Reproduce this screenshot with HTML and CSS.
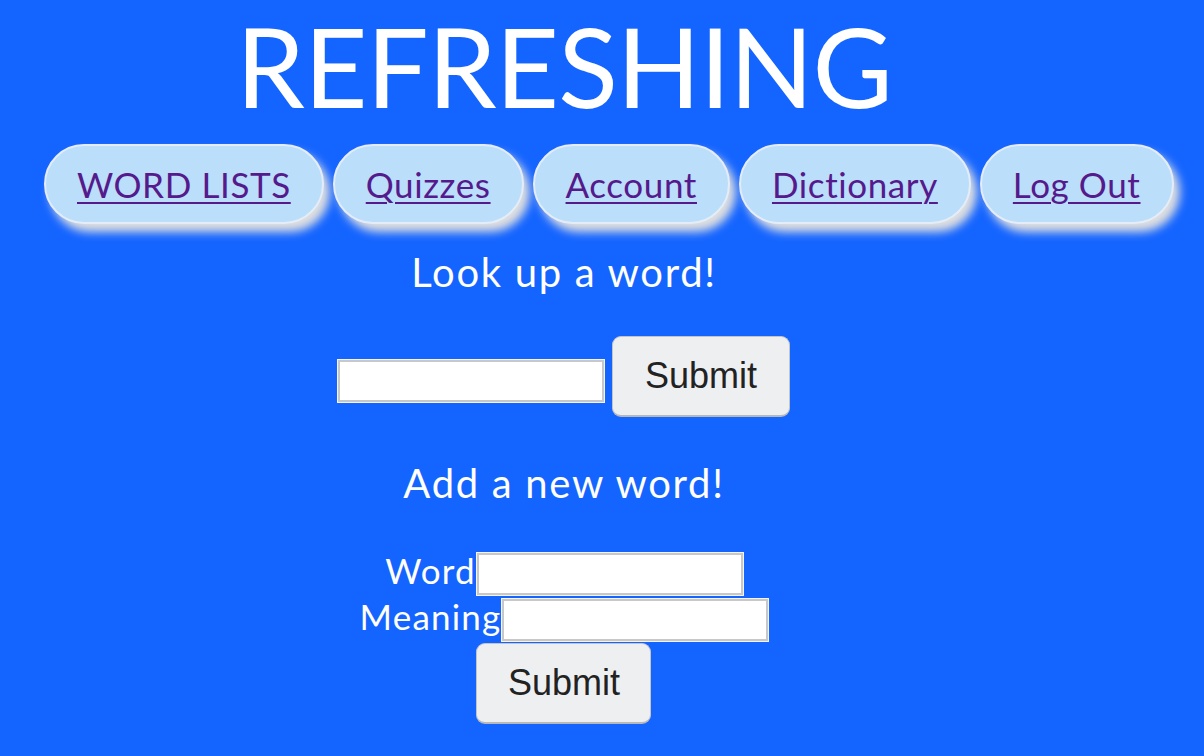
FILE: index.html
```html
<!DOCTYPE html>
<html lang="en">
<head>
<meta charset="utf-8">
<title>Refreshing</title>
<link rel="stylesheet" href="styles.css">
</head>
<body>
<div class="page">
  <h1 class="title">REFRESHING</h1>
  <nav class="nav">
    <a class="nav-btn" href="#">WORD LISTS</a>
    <a class="nav-btn" href="#">Quizzes</a>
    <a class="nav-btn" href="#">Account</a>
    <a class="nav-btn" href="#">Dictionary</a>
    <a class="nav-btn" href="#">Log Out</a>
  </nav>
  <h2 class="heading heading-lookup">Look up a word!</h2>
  <form class="search-form">
    <input class="text-input" type="text">
    <button class="submit-btn" type="button">Submit</button>
  </form>
  <h2 class="heading heading-add">Add a new word!</h2>
  <form class="add-form">
    <div class="field-row"><label class="field-label">Word</label><input class="text-input" type="text"></div>
    <div class="field-row"><label class="field-label">Meaning</label><input class="text-input" type="text"></div>
    <button class="submit-btn submit-add" type="button">Submit</button>
  </form>
</div>
</body>
</html>
```
FILE: styles.css
```css
html, body {
  margin: 0;
  padding: 0;
  background: #1464ff;
}
body {
  font-family: "Lato", "Open Sans", sans-serif;
  color: #ffffff;
  overflow: hidden;
}
.page {
  width: 1128px;
  display: flex;
  flex-direction: column;
  align-items: center;
}
.title {
  margin: 10px 0 0 0;
  font-size: 110px;
  font-weight: 400;
  line-height: 110px;
  letter-spacing: -1px;
}
.nav {
  align-self: flex-start;
  display: flex;
  gap: 9px;
  margin: 24px 0 0 44px;
}
.nav-btn {
  display: flex;
  align-items: center;
  height: 76px;
  padding: 0 31px;
  border: 2px solid #e4edf7;
  border-radius: 40px;
  background: #bbdefb;
  box-shadow: 6px 8px 10px #e0e0e0;
  color: #551a8b;
  font-size: 35px;
  letter-spacing: 0.6px;
  text-decoration: underline;
  text-decoration-thickness: 2px;
  text-underline-offset: 4px;
  white-space: nowrap;
}
.heading {
  margin: 0;
  font-size: 40px;
  font-weight: 400;
  line-height: 48px;
  letter-spacing: 1.7px;
}
.heading-lookup {
  margin-top: 24px;
}
.search-form {
  display: flex;
  align-items: flex-start;
  gap: 8px;
  margin-top: 40px;
}
.search-form .text-input {
  margin-top: 24px;
}
.text-input {
  box-sizing: border-box;
  width: 266px;
  height: 42px;
  margin: 0;
  padding: 0;
  background: #ffffff;
  border: 2px solid #c8c8c8;
  outline: 1px solid #f4f4f4;
}
.submit-btn {
  box-sizing: border-box;
  width: 178px;
  height: 81px;
  margin: 0;
  padding: 0;
  background: #eeeff1;
  border: 1px solid #c4c4c4;
  border-bottom: 2px solid #b8b8b8;
  border-radius: 9px;
  color: #222222;
  font-family: "Liberation Sans", Arial, sans-serif;
  font-size: 36px;
}
.heading-add {
  margin-top: 42px;
}
.add-form {
  display: flex;
  flex-direction: column;
  align-items: center;
  margin-top: 46px;
}
.field-row {
  display: flex;
  align-items: flex-start;
  height: 46px;
}
.field-label {
  font-size: 35px;
  line-height: 34px;
  letter-spacing: 1.2px;
  margin-right: 1px;
}
.submit-add {
  width: 175px;
  margin-top: -2px;
}
```
